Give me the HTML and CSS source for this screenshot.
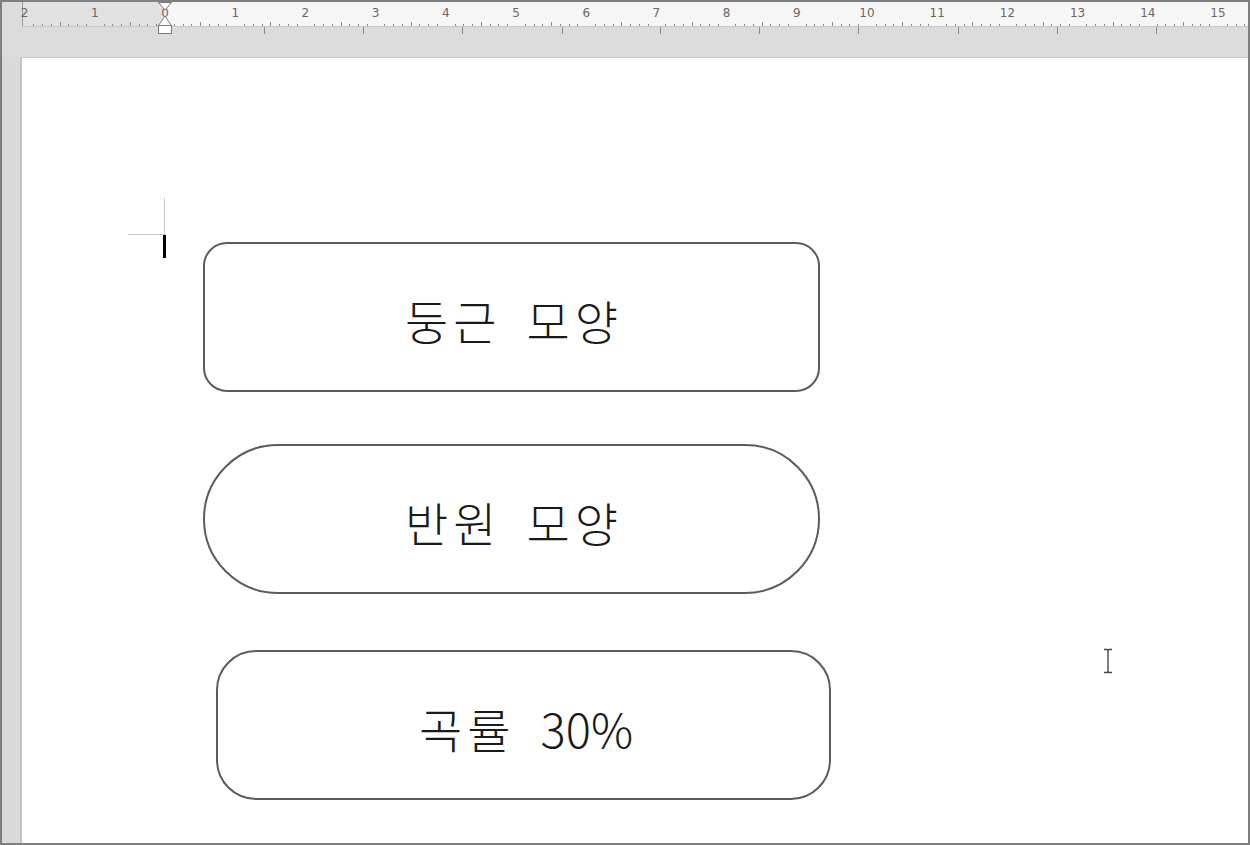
FILE: index.html
```html
<!DOCTYPE html>
<html lang="ko">
<head>
<meta charset="utf-8">
<title>도형 모서리</title>
<link rel="stylesheet" href="styles.css">
</head>
<body>
<div class="window">
  <div class="ruler-area">
    <svg class="ruler" width="1246" height="40" viewBox="0 0 1246 40" xmlns="http://www.w3.org/2000/svg">
      <rect x="20" y="0" width="1226" height="24" fill="#f6f6f6"/>
      <rect x="20" y="0" width="143" height="24" fill="#e1e1e1"/>
      <line x1="20.5" y1="0" x2="20.5" y2="24" stroke="#9a9a9a"/>
      <line x1="20" y1="24.5" x2="1246" y2="24.5" stroke="#c9c9c9"/>
      <g id="ticks" stroke="#8a8a8a" stroke-width="1"></g>
      <g class="nums" font-family="'DejaVu Sans', sans-serif" font-size="12" fill="#6e665e" text-anchor="middle">
        <text x="22.6" y="15">2</text>
        <text x="92.8" y="15">1</text>
        <text x="163" y="15">0</text>
        <text x="233.2" y="15">1</text>
        <text x="303.4" y="15">2</text>
        <text x="373.6" y="15">3</text>
        <text x="443.8" y="15">4</text>
        <text x="514" y="15">5</text>
        <text x="584.2" y="15">6</text>
        <text x="654.4" y="15">7</text>
        <text x="724.6" y="15">8</text>
        <text x="794.8" y="15">9</text>
        <text x="865" y="15">10</text>
        <text x="935.2" y="15">11</text>
        <text x="1005.4" y="15">12</text>
        <text x="1075.6" y="15">13</text>
        <text x="1145.8" y="15">14</text>
        <text x="1216" y="15">15</text>
      </g>
      <g stroke="#8a8a8a" stroke-width="1">
        <line x1="262.5" y1="25" x2="262.5" y2="32"/>
        <line x1="361.5" y1="25" x2="361.5" y2="32"/>
        <line x1="460.5" y1="25" x2="460.5" y2="32"/>
        <line x1="560.5" y1="25" x2="560.5" y2="32"/>
        <line x1="658.5" y1="25" x2="658.5" y2="32"/>
        <line x1="757.5" y1="25" x2="757.5" y2="32"/>
        <line x1="856.5" y1="25" x2="856.5" y2="32"/>
        <line x1="956.5" y1="25" x2="956.5" y2="32"/>
        <line x1="1055.5" y1="25" x2="1055.5" y2="32"/>
        <line x1="1154.5" y1="25" x2="1154.5" y2="32"/>
      </g>
      <g fill="#ffffff" stroke="#7a7a7a" stroke-width="1">
        <path d="M156.5 0.5 H169.5 L163 8 Z"/>
        <path d="M163 14 L169.5 23.5 H156.5 Z"/>
        <rect x="156.5" y="23.5" width="13" height="8"/>
      </g>
    </svg>
  </div>
  <div class="body-row">
    <div class="gutter"></div>
    <div class="page">
      <span class="crop-h"></span>
      <span class="crop-v"></span>
      <span class="caret"></span>
      <div class="shape shape-round"><span class="label">둥근 모양</span></div>
      <div class="shape shape-pill"><span class="label">반원 모양</span></div>
      <div class="shape shape-curve"><span class="label">곡률 <span class="num">30%</span></span></div>
      <svg class="ibeam" width="10" height="26" viewBox="0 0 10 26" xmlns="http://www.w3.org/2000/svg">
        <g stroke="#4a4a4a" stroke-width="1.4" fill="none">
          <path d="M1 1.5 H4 M6 1.5 H9 M4 1.5 Q5 1.5 5 3 V23 Q5 24.5 4 24.5 H1 M5 23 Q5 24.5 6 24.5 H9 M5 3 Q5 1.5 6 1.5"/>
        </g>
      </svg>
    </div>
  </div>
</div>
<script>
(function(){
  var g = document.getElementById('ticks');
  var ns = 'http://www.w3.org/2000/svg';
  var step = 70.2 / 8;
  for (var i = -16; i <= 8 * 15 + 3; i++) {
    var x = 163 + i * step;
    if (x < 21 || x > 1245) continue;
    var m = ((i % 8) + 8) % 8;
    var h = m === 4 ? 4 : 2;
    if (m === 0) continue;
    var l = document.createElementNS(ns, 'line');
    var xr = Math.round(x) + 0.5;
    l.setAttribute('x1', xr); l.setAttribute('x2', xr);
    l.setAttribute('y1', 24 - h); l.setAttribute('y2', 24);
    g.appendChild(l);
  }
})();
</script>
</body>
</html>
```

FILE: styles.css
```css
html, body {
  margin: 0;
  padding: 0;
  width: 1250px;
  height: 845px;
  overflow: hidden;
  background: #dcdcdc;
}

.window {
  box-sizing: border-box;
  width: 1250px;
  height: 845px;
  border: 2px solid #7f7f7f;
  background: #dcdcdc;
  display: flex;
  flex-direction: column;
}

.ruler-area {
  height: 55px;
  flex: none;
  background: #dcdcdc;
}

.ruler {
  display: block;
}

.body-row {
  flex: 1;
  display: flex;
  min-height: 0;
}

.gutter {
  width: 18px;
  flex: none;
  background: #dadada;
  border-right: 2px solid #c4c4c4;
}

.page {
  position: relative;
  flex: 1;
  background: #ffffff;
  border-top: 1px solid #c8c8c8;
  padding-top: 184px;
  box-sizing: border-box;
  font-family: "Noto Sans CJK KR", "Noto Sans", sans-serif;
}

.shape {
  box-sizing: border-box;
  height: 150px;
  border: 2px solid #5c5c5c;
  display: flex;
  align-items: center;
  justify-content: center;
  background: #ffffff;
}

.label {
  font-size: 47px;
  font-weight: 300;
  color: #1a1a1a;
  letter-spacing: 5px;
  word-spacing: 7px;
  line-height: 1;
  padding-top: 4px;
  padding-left: 5px;
}

.num {
  letter-spacing: 0;
}

.shape-round {
  margin-left: 181px;
  width: 617px;
  border-radius: 24px;
}

.shape-pill {
  margin-left: 181px;
  margin-top: 52px;
  width: 617px;
  border-radius: 75px;
}

.shape-curve {
  margin-left: 194px;
  margin-top: 56px;
  width: 615px;
  border-radius: 40px;
}

.crop-h {
  position: absolute;
  left: 106px;
  top: 176px;
  width: 36px;
  height: 1px;
  background: #c9c9c9;
}

.crop-v {
  position: absolute;
  left: 142px;
  top: 140px;
  width: 1px;
  height: 37px;
  background: #c9c9c9;
}

.caret {
  position: absolute;
  left: 141px;
  top: 177px;
  width: 3px;
  height: 23px;
  background: #000000;
}

.ibeam {
  position: absolute;
  left: 1081px;
  top: 590px;
}
```
